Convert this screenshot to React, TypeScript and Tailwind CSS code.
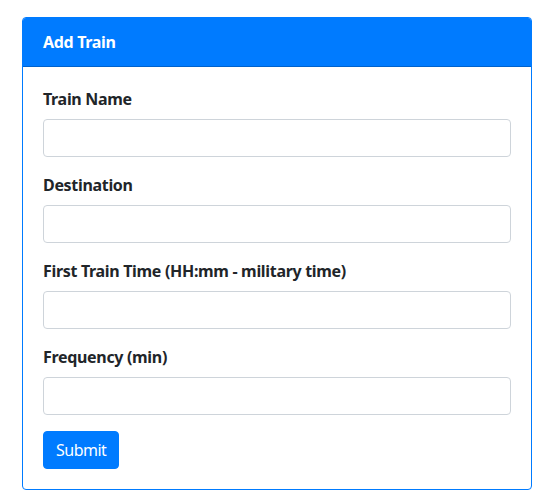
import React from "react";

const fields = [
  { id: "train-name", label: "Train Name" },
  { id: "destination", label: "Destination" },
  { id: "first-train", label: "First Train Time (HH:mm - military time)" },
  { id: "frequency", label: "Frequency (min)" },
];

export default function App() {
  return (
    <div
      className="min-h-[498px] bg-white pt-[17px] pl-[22px] tracking-[-0.32px] text-[#212529]"
      style={{ fontFamily: '"Segoe UI", "Noto Sans", "Open Sans", sans-serif' }}
    >
      <div className="w-[510px] overflow-hidden rounded border border-[#007bff] bg-white">
        <div className="border-b border-[#0062cc] bg-[#007bff] px-5 py-3 text-base leading-6 font-bold text-white">
          Add Train
        </div>
        <form className="p-5" onSubmit={(e) => e.preventDefault()}>
          {fields.map((field) => (
            <div key={field.id} className="mb-4">
              <label
                htmlFor={field.id}
                className="mb-2 block text-base leading-6 font-bold"
              >
                {field.label}
              </label>
              <input
                id={field.id}
                type="text"
                className="block h-[38px] w-full rounded border border-[#ced4da] bg-white px-3 text-base text-[#495057] outline-none"
              />
            </div>
          ))}
          <button
            type="submit"
            className="h-[38px] rounded border border-[#007bff] bg-[#007bff] px-3 text-base leading-6 tracking-[-0.5px] text-white"
          >
            Submit
          </button>
        </form>
      </div>
    </div>
  );
}
